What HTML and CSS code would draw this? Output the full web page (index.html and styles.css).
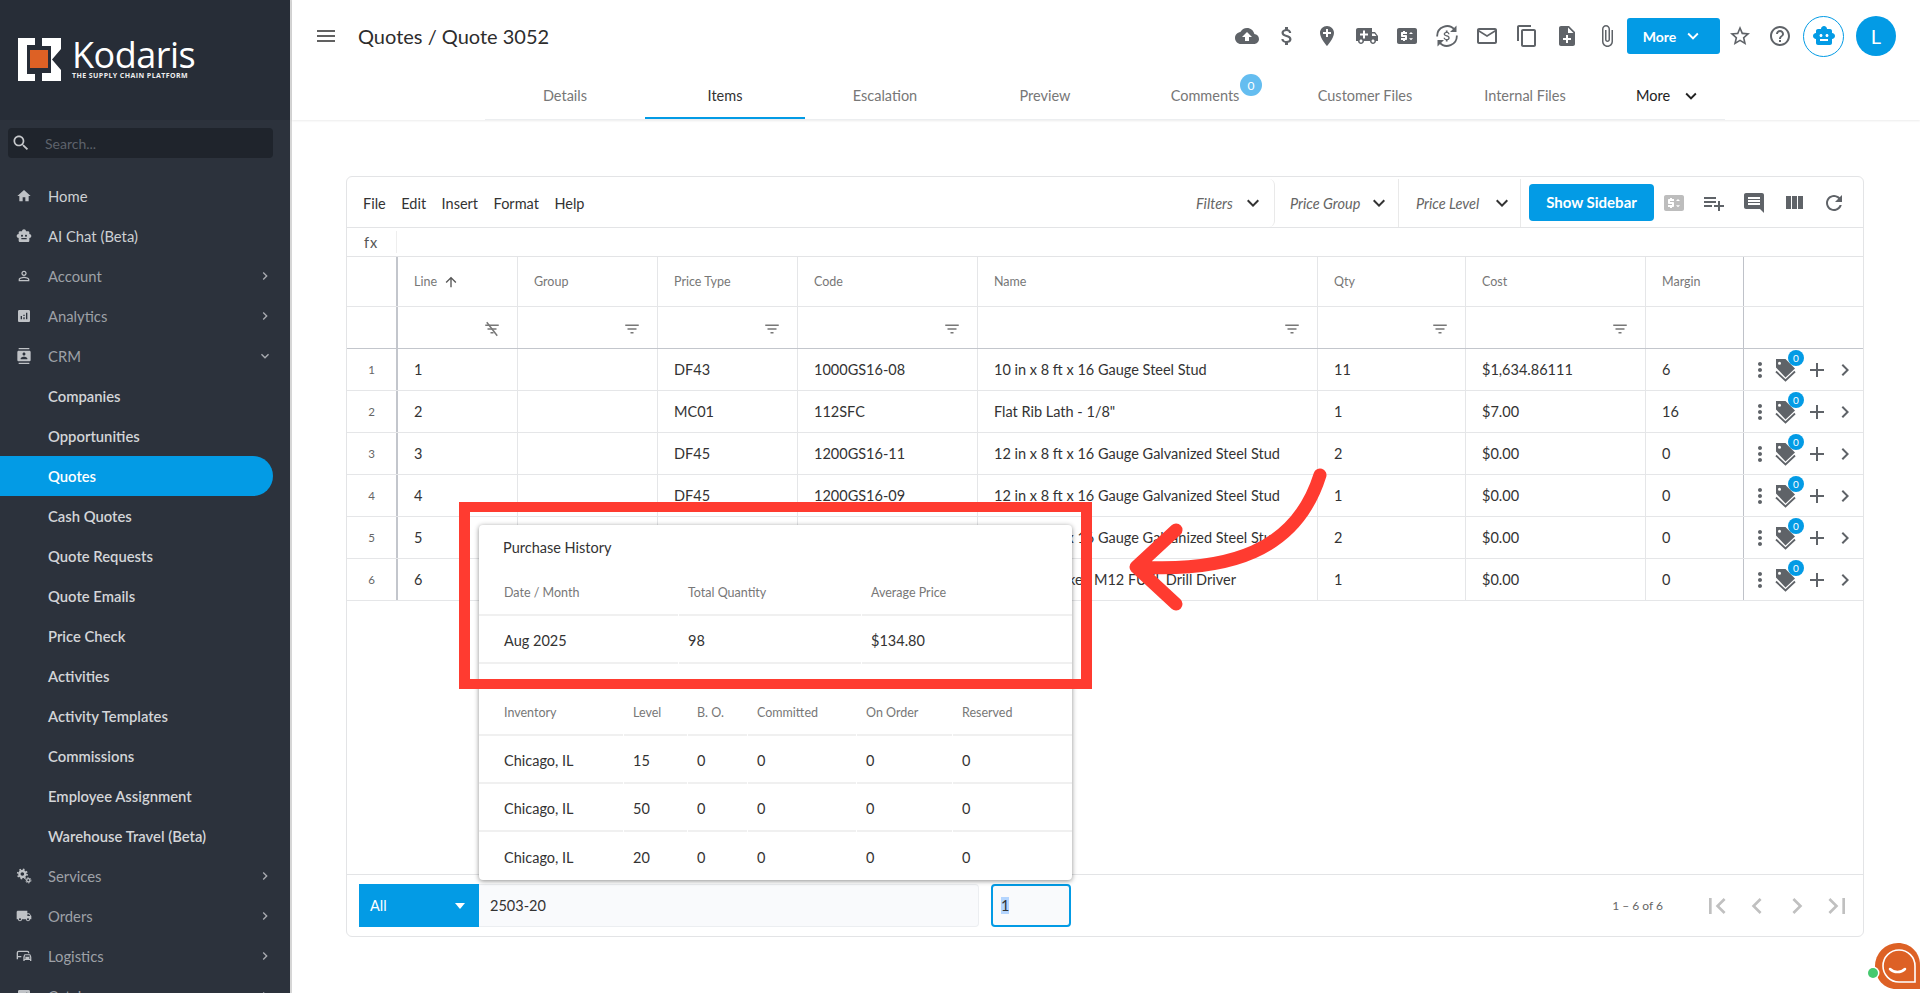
FILE: index.html
```html
<!DOCTYPE html>
<html lang="en">
<head>
<meta charset="utf-8">
<title>Quote 3052</title>
<link rel="stylesheet" href="styles.css">
</head>
<body>
<svg class="defs" width="0" height="0" aria-hidden="true">
<symbol id="i-cloud" viewBox="0 0 24 24"><path d="M19.35 10.04C18.67 6.59 15.64 4 12 4 9.11 4 6.6 5.64 5.35 8.04 2.34 8.36 0 10.91 0 14c0 3.31 2.69 6 6 6h13c2.76 0 5-2.24 5-5 0-2.64-2.05-4.78-4.65-4.96zM14 13v4h-4v-4H7l5-5 5 5h-3z"/></symbol>
<symbol id="i-money" viewBox="0 0 24 24"><path d="M11.8 10.9c-2.27-.59-3-1.2-3-2.15 0-1.09 1.01-1.85 2.7-1.85 1.78 0 2.44.85 2.5 2.1h2.21c-.07-1.72-1.12-3.3-3.21-3.81V3h-3v2.16c-1.94.42-3.5 1.68-3.5 3.61 0 2.31 1.91 3.46 4.7 4.13 2.5.6 3 1.48 3 2.41 0 .69-.49 1.79-2.7 1.79-2.06 0-2.87-.92-2.98-2.1h-2.2c.12 2.19 1.76 3.42 3.68 3.83V21h3v-2.15c1.95-.37 3.5-1.5 3.5-3.55 0-2.84-2.43-3.81-4.7-4.4z"/></symbol>
<symbol id="i-pin" viewBox="0 0 24 24"><path d="M12 2C8.14 2 5 5.14 5 9c0 5.25 7 13 7 13s7-7.75 7-13c0-3.86-3.14-7-7-7zm4 8h-3v3h-2v-3H8V8h3V5h2v3h3v2z"/></symbol>
<symbol id="i-truck" viewBox="0 0 24 24"><path d="M20 8h-3V4H3c-1.1 0-2 .9-2 2v11h2c0 1.66 1.34 3 3 3s3-1.34 3-3h6c0 1.66 1.34 3 3 3s3-1.34 3-3h2v-5l-3-4zM6 18.5c-.83 0-1.5-.67-1.5-1.5s.67-1.5 1.5-1.5 1.5.67 1.5 1.5-.67 1.5-1.5 1.5zm13.5-9l1.96 2.5H17V9.5h2.5zm-1.5 9c-.83 0-1.5-.67-1.5-1.5s.67-1.5 1.5-1.5 1.5.67 1.5 1.5-.67 1.5-1.5 1.5z"/></symbol>
<symbol id="i-truckplus" viewBox="0 0 24 24"><path d="M20 8h-3V4H3c-1.1 0-2 .9-2 2v11h2c0 1.66 1.34 3 3 3s3-1.34 3-3h6c0 1.66 1.34 3 3 3s3-1.34 3-3h2v-5l-3-4zM6 18.5c-.83 0-1.5-.67-1.5-1.5s.67-1.5 1.5-1.5 1.5.67 1.5 1.5-.67 1.5-1.5 1.5zm13.5-9l1.96 2.5H17V9.5h2.5zm-1.5 9c-.83 0-1.5-.67-1.5-1.5s.67-1.5 1.5-1.5 1.5.67 1.5 1.5-.67 1.5-1.5 1.5z"/><path fill="#fff" d="M8 6.5h2v3h3v2h-3v3H8v-3H5v-2h3z"/></symbol>
<symbol id="i-price" viewBox="0 0 24 24"><path d="M20 4H4c-1.11 0-1.99.89-1.99 2L2 18c0 1.11.89 2 2 2h16c1.11 0 2-.89 2-2V6c0-1.11-.89-2-2-2zm-8 6H8v1h3c.55 0 1 .45 1 1v3c0 .55-.45 1-1 1h-1v1H8v-1H6v-2h4v-1H7c-.55 0-1-.45-1-1V9c0-.55.45-1 1-1h1V7h2v1h2v2zm4 6.25l-2-2h4l-2 2zM14 10l2-2 2 2h-4z"/></symbol>
<symbol id="i-sync" viewBox="0 0 24 24"><path fill="none" stroke="currentColor" stroke-width="1.8" d="M2.200 12.500A9.800 9.800 0 0 1 19.500 5.700M21.800 11.500A9.800 9.800 0 0 1 4.500 18.300"/><path d="M21.500 1.500V8h-6.500zM2.500 22.500V16h6.500z"/><path transform="translate(4.800 4.800) scale(.6)" d="M11.800 10.900c-2.270-.59-3-1.200-3-2.150 0-1.090 1.010-1.850 2.700-1.850 1.780 0 2.440.85 2.500 2.100h2.210c-.07-1.720-1.120-3.300-3.210-3.810V3h-3v2.160c-1.940.42-3.500 1.680-3.500 3.610 0 2.310 1.910 3.460 4.700 4.130 2.500.6 3 1.480 3 2.410 0 .69-.49 1.790-2.700 1.790-2.060 0-2.870-.92-2.980-2.100h-2.200c.12 2.190 1.760 3.420 3.680 3.830V21h3v-2.150c1.950-.37 3.500-1.500 3.500-3.550 0-2.840-2.430-3.810-4.700-4.400z"/></symbol>
<symbol id="i-mail" viewBox="0 0 24 24"><path d="M20 4H4c-1.100 0-1.990.9-1.990 2L2 18c0 1.100.9 2 2 2h16c1.100 0 2-.9 2-2V6c0-1.100-.9-2-2-2zm0 14H4V8l8 5 8-5v10zm-8-7L4 6h16l-8 5z"/></symbol>
<symbol id="i-copy" viewBox="0 0 24 24"><path d="M16 1H4c-1.100 0-2 .9-2 2v14h2V3h12V1zm3 4H8c-1.100 0-2 .9-2 2v14c0 1.100.9 2 2 2h11c1.100 0 2-.9 2-2V7c0-1.100-.9-2-2-2zm0 16H8V7h11v14z"/></symbol>
<symbol id="i-note" viewBox="0 0 24 24"><path d="M14 2H6c-1.100 0-1.990.9-1.990 2L4 20c0 1.100.89 2 1.990 2H18c1.100 0 2-.9 2-2V8l-6-6zm2 14h-3v3h-2v-3H8v-2h3v-3h2v3h3v2zm-3-7V3.500L18.500 9H13z"/></symbol>
<symbol id="i-clip" viewBox="0 0 24 24"><path d="M16.500 6v11.500c0 2.210-1.790 4-4 4s-4-1.790-4-4V5c0-1.380 1.120-2.500 2.500-2.500s2.500 1.120 2.500 2.500v10.500c0 .55-.45 1-1 1s-1-.45-1-1V6H10v9.500c0 1.380 1.120 2.500 2.500 2.500s2.500-1.120 2.500-2.500V5c0-2.210-1.790-4-4-4S7 2.790 7 5v12.500c0 3.040 2.460 5.500 5.500 5.500s5.500-2.460 5.500-5.500V6h-1.500z"/></symbol>
<symbol id="i-star" viewBox="0 0 24 24"><path d="M22 9.240l-7.190-.62L12 2 9.190 8.630 2 9.240l5.460 4.730L5.820 21 12 17.270 18.180 21l-1.630-7.030L22 9.240zM12 15.400l-3.760 2.270 1-4.280-3.320-2.880 4.380-.38L12 6.100l1.710 4.040 4.380.38-3.320 2.880 1 4.280L12 15.400z"/></symbol>
<symbol id="i-help" viewBox="0 0 24 24"><path d="M11 18h2v-2h-2v2zm1-16C6.480 2 2 6.480 2 12s4.480 10 10 10 10-4.480 10-10S17.520 2 12 2zm0 18c-4.410 0-8-3.590-8-8s3.590-8 8-8 8 3.590 8 8-3.590 8-8 8zm0-14c-2.210 0-4 1.790-4 4h2c0-1.100.9-2 2-2s2 .9 2 2c0 2-3 1.750-3 5h2c0-2.250 3-2.500 3-5 0-2.210-1.790-4-4-4z"/></symbol>
<symbol id="i-bot" viewBox="0 0 24 24"><path d="M20 9V7c0-1.100-.9-2-2-2h-3c0-1.660-1.340-3-3-3S9 3.340 9 5H6c-1.100 0-2 .9-2 2v2c-1.660 0-3 1.340-3 3s1.340 3 3 3v4c0 1.100.9 2 2 2h12c1.100 0 2-.9 2-2v-4c1.660 0 3-1.340 3-3s-1.340-3-3-3zM7.500 11.500c0-.83.67-1.500 1.500-1.500s1.500.67 1.500 1.500S9.830 13 9 13s-1.500-.67-1.500-1.500zM16 17H8v-2h8v2zm-1-4c-.83 0-1.500-.67-1.500-1.500S14.170 10 15 10s1.500.67 1.500 1.500S15.830 13 15 13z"/></symbol>
<symbol id="i-home" viewBox="0 0 24 24"><path d="M10 20v-6h4v6h5v-8h3L12 3 2 12h3v8z"/></symbol>
<symbol id="i-search" viewBox="0 0 24 24"><path d="M15.500 14h-.79l-.28-.27C15.410 12.590 16 11.110 16 9.500 16 5.910 13.090 3 9.500 3S3 5.910 3 9.500 5.910 16 9.500 16c1.610 0 3.090-.59 4.230-1.570l.27.28v.79l5 4.990L20.490 19l-4.990-5zm-6 0C7.010 14 5 11.990 5 9.500S7.010 5 9.500 5 14 7.010 14 9.500 11.990 14 9.500 14z"/></symbol>
<symbol id="i-person" viewBox="0 0 24 24"><path d="M12 5.900c1.160 0 2.100.94 2.100 2.100s-.94 2.100-2.100 2.100S9.900 9.160 9.900 8s.94-2.100 2.100-2.100m0 9c2.970 0 6.100 1.460 6.100 2.100v1.100H5.900V17c0-.64 3.130-2.100 6.100-2.100M12 4C9.790 4 8 5.790 8 8s1.790 4 4 4 4-1.790 4-4-1.790-4-4-4zm0 9c-2.670 0-8 1.340-8 4v3h16v-3c0-2.660-5.330-4-8-4z"/></symbol>
<symbol id="i-analytics" viewBox="0 0 24 24"><path d="M19 3H5c-1.100 0-2 .9-2 2v14c0 1.100.9 2 2 2h14c1.100 0 2-.9 2-2V5c0-1.100-.9-2-2-2zM9 17H7v-5h2v5zm4 0h-2v-3h2v3zm0-5h-2v-2h2v2zm4 5h-2V7h2v10z"/></symbol>
<symbol id="i-contact" viewBox="0 0 24 24"><path d="M20 0H4v2h16V0zM4 24h16v-2H4v2zM20 4H4c-1.100 0-2 .9-2 2v12c0 1.100.9 2 2 2h16c1.100 0 2-.9 2-2V6c0-1.100-.9-2-2-2zm-8 2.750c1.240 0 2.250 1.010 2.250 2.250s-1.010 2.250-2.250 2.250S9.750 10.240 9.750 9 10.760 6.750 12 6.750zM17 17H7v-1.500c0-1.670 3.330-2.500 5-2.500s5 .83 5 2.500V17z"/></symbol>
<symbol id="i-gears" viewBox="0 0 24 24"><circle cx="9.500" cy="9" r="4.500" fill="none" stroke="currentColor" stroke-width="3.500"/><circle cx="9.500" cy="9" r="7" fill="none" stroke="currentColor" stroke-width="2.500" stroke-dasharray="2.500 3"/><circle cx="18.500" cy="18.500" r="2.500" fill="none" stroke="currentColor" stroke-width="2"/><circle cx="18.500" cy="18.500" r="4" fill="none" stroke="currentColor" stroke-width="1.500" stroke-dasharray="2 2.200"/></symbol>
<symbol id="i-car" viewBox="0 0 24 24"><path d="M4 4h13a3 3 0 0 1 3 3v1h-2V7a1 1 0 0 0-1-1H4a1 1 0 0 0-1 1v5h5v2H3v3H1V7a3 3 0 0 1 3-3z"/><path d="M11 13.500l1-3a1.500 1.500 0 0 1 1.400-1h7.200a1.500 1.500 0 0 1 1.400 1l1 3v6h-2v-1.500H13v1.500h-2zM13 13h8l-.6-2h-6.800zm.5 3a1 1 0 1 0 0-2 1 1 0 0 0 0 2zm7 0a1 1 0 1 0 0-2 1 1 0 0 0 0 2z"/></symbol>
<symbol id="i-menu" viewBox="0 0 24 24"><path d="M3 18h18v-2H3v2zm0-5h18v-2H3v2zm0-7v2h18V6H3z"/></symbol>
<symbol id="i-down" viewBox="0 0 24 24"><path d="M16.590 8.590L12 13.170 7.410 8.590 6 10l6 6 6-6z"/></symbol>
<symbol id="i-right" viewBox="0 0 24 24"><path d="M10 6L8.590 7.410 13.170 12l-4.580 4.590L10 18l6-6z"/></symbol>
<symbol id="i-left" viewBox="0 0 24 24"><path d="M15.410 7.410L14 6l-6 6 6 6 1.410-1.410L10.830 12z"/></symbol>
<symbol id="i-first" viewBox="0 0 24 24"><path d="M18.410 16.590L13.820 12l4.590-4.590L17 6l-6 6 6 6zM6 6h2v12H6z"/></symbol>
<symbol id="i-last" viewBox="0 0 24 24"><path d="M5.590 7.410L10.180 12l-4.590 4.590L7 18l6-6-6-6zM16 6h2v12h-2z"/></symbol>
<symbol id="i-playlist" viewBox="0 0 24 24"><path d="M14 10H2v2h12v-2zm0-4H2v2h12V6zm4 8v-4h-2v4h-4v2h4v4h2v-4h4v-2h-4zM2 16h8v-2H2v2z"/></symbol>
<symbol id="i-comment" viewBox="0 0 24 24"><path d="M21.990 4c0-1.100-.89-2-1.990-2H4c-1.100 0-2 .9-2 2v12c0 1.100.9 2 2 2h14l4 4-.01-18zM18 14H6v-2h12v2zm0-3H6V9h12v2zm0-3H6V6h12v2z"/></symbol>
<symbol id="i-columns" viewBox="0 0 24 24"><path d="M10 18h5V5h-5v13zm-6 0h5V5H4v13zM16 5v13h5V5h-5z"/></symbol>
<symbol id="i-refresh" viewBox="0 0 24 24"><path d="M17.650 6.350C16.200 4.900 14.210 4 12 4c-4.420 0-7.990 3.580-7.990 8s3.570 8 7.990 8c3.730 0 6.840-2.550 7.730-6h-2.080c-.82 2.330-3.040 4-5.650 4-3.310 0-6-2.690-6-6s2.690-6 6-6c1.660 0 3.140.69 4.220 1.780L13 11h7V4l-2.350 2.350z"/></symbol>
<symbol id="i-filter" viewBox="0 0 24 24"><path d="M10 18h4v-2h-4v2zM3 6v2h18V6H3zm3 7h12v-2H6v2z"/></symbol>
<symbol id="i-filteroff" viewBox="0 0 24 24"><path d="M10 18h4v-2h-4v2zM3 6v2h18V6H3zm3 7h12v-2H6v2z"/><path d="M5 3l14 18" fill="none" stroke="currentColor" stroke-width="2"/></symbol>
<symbol id="i-up" viewBox="0 0 24 24"><path d="M4 12l1.410 1.410L11 7.830V20h2V7.830l5.580 5.590L20 12l-8-8-8 8z"/></symbol>
<symbol id="i-dots" viewBox="0 0 24 24"><path d="M12 8c1.100 0 2-.9 2-2s-.9-2-2-2-2 .9-2 2 .9 2 2 2zm0 2c-1.100 0-2 .9-2 2s.9 2 2 2 2-.9 2-2-.9-2-2-2zm0 6c-1.100 0-2 .9-2 2s.9 2 2 2 2-.9 2-2-.9-2-2-2z"/></symbol>
<symbol id="i-add" viewBox="0 0 24 24"><path d="M19 13h-6v6h-2v-6H5v-2h6V5h2v6h6v2z"/></symbol>
<symbol id="i-tags" viewBox="0 0 24 24"><path fill-rule="evenodd" d="M4 1h9.500L23 10.500 13.500 19.500 4 9.500zM7.500 3.700a1.500 1.500 0 1 0 0 3 1.500 1.500 0 0 0 0-3z"/><path d="M4 13.500L13.500 22.500 23 13.500" fill="none" stroke="currentColor" stroke-width="1.800"/></symbol>
</svg>

<div class="app">
  <aside class="sidebar">
    <div class="brand">
      <svg class="logo-mark" viewBox="0 0 43 43"><path fill="#fff" d="M0 0H17V7H9V36H17V43H0Z"/><path fill="#fff" d="M24 0H43V11L34 21.500L43 32V43H24V35H33V8H24Z"/><rect x="12" y="12" width="18" height="18" fill="#dd6125"/></svg>
      <div class="logo-text">
        <div class="logo-name">Kodaris</div>
        <div class="logo-tag">THE SUPPLY CHAIN PLATFORM</div>
      </div>
    </div>
    <div class="search">
      <svg class="ic search-ic"><use href="#i-search"/></svg>
      <span>Search...</span>
    </div>
    <nav class="nav">
      <a class="item bright"><svg class="ic nav-ic"><use href="#i-home"/></svg>Home</a>
      <a class="item bright"><svg class="ic nav-ic"><use href="#i-bot"/></svg>AI Chat (Beta)</a>
      <a class="item"><svg class="ic nav-ic"><use href="#i-person"/></svg>Account<svg class="ic nav-ch"><use href="#i-right"/></svg></a>
      <a class="item"><svg class="ic nav-ic"><use href="#i-analytics"/></svg>Analytics<svg class="ic nav-ch"><use href="#i-right"/></svg></a>
      <a class="item"><svg class="ic nav-ic"><use href="#i-contact"/></svg>CRM<svg class="ic nav-ch"><use href="#i-down"/></svg></a>
      <a class="item sub">Companies</a>
      <a class="item sub">Opportunities</a>
      <a class="item sub active">Quotes</a>
      <a class="item sub">Cash Quotes</a>
      <a class="item sub">Quote Requests</a>
      <a class="item sub">Quote Emails</a>
      <a class="item sub">Price Check</a>
      <a class="item sub">Activities</a>
      <a class="item sub">Activity Templates</a>
      <a class="item sub">Commissions</a>
      <a class="item sub">Employee Assignment</a>
      <a class="item sub">Warehouse Travel (Beta)</a>
      <a class="item"><svg class="ic nav-ic"><use href="#i-gears"/></svg>Services<svg class="ic nav-ch"><use href="#i-right"/></svg></a>
      <a class="item"><svg class="ic nav-ic"><use href="#i-truck"/></svg>Orders<svg class="ic nav-ch"><use href="#i-right"/></svg></a>
      <a class="item"><svg class="ic nav-ic"><use href="#i-car"/></svg>Logistics<svg class="ic nav-ch"><use href="#i-right"/></svg></a>
      <a class="item"><svg class="ic nav-ic"><use href="#i-analytics"/></svg>Catalog<svg class="ic nav-ch"><use href="#i-right"/></svg></a>
    </nav>
  </aside>

  <main class="main">
    <header class="topbar">
      <div class="top-row">
        <svg class="ic menu-ic"><use href="#i-menu"/></svg>
        <h1 class="title">Quotes / Quote 3052</h1>
        <div class="actions">
          <span class="act"><svg class="ic"><use href="#i-cloud"/></svg></span>
          <span class="act"><svg class="ic"><use href="#i-money"/></svg></span>
          <span class="act"><svg class="ic"><use href="#i-pin"/></svg></span>
          <span class="act"><svg class="ic"><use href="#i-truckplus"/></svg></span>
          <span class="act"><svg class="ic"><use href="#i-price"/></svg></span>
          <span class="act"><svg class="ic"><use href="#i-sync"/></svg></span>
          <span class="act"><svg class="ic"><use href="#i-mail"/></svg></span>
          <span class="act"><svg class="ic"><use href="#i-copy"/></svg></span>
          <span class="act"><svg class="ic"><use href="#i-note"/></svg></span>
          <span class="act"><svg class="ic"><use href="#i-clip"/></svg></span>
          <button class="btn more-btn">More<svg class="ic"><use href="#i-down"/></svg></button>
          <span class="act"><svg class="ic"><use href="#i-star"/></svg></span>
          <span class="act"><svg class="ic"><use href="#i-help"/></svg></span>
          <span class="bot-circle"><svg class="ic"><use href="#i-bot"/></svg></span>
          <span class="avatar">L</span>
        </div>
      </div>
      <div class="tabs">
        <span class="tab">Details</span>
        <span class="tab on">Items</span>
        <span class="tab">Escalation</span>
        <span class="tab">Preview</span>
        <span class="tab">Comments<b class="tab-badge">0</b></span>
        <span class="tab">Customer Files</span>
        <span class="tab">Internal Files</span>
        <span class="tab tab-more">More<svg class="ic"><use href="#i-down"/></svg></span>
      </div>
    </header>

    <section class="card">
      <div class="toolbar">
        <div class="menus"><span>File</span><span>Edit</span><span>Insert</span><span>Format</span><span>Help</span></div>
        <div class="tools">
          <span class="drop drop-filter">Filters<svg class="ic"><use href="#i-down"/></svg></span>
          <span class="drop drop-group">Price Group<svg class="ic"><use href="#i-down"/></svg></span>
          <span class="drop drop-level">Price Level<svg class="ic"><use href="#i-down"/></svg></span>
          <button class="btn side-btn">Show Sidebar</button>
          <span class="tool"><svg class="ic light"><use href="#i-price"/></svg></span>
          <span class="tool"><svg class="ic"><use href="#i-playlist"/></svg></span>
          <span class="tool"><svg class="ic"><use href="#i-comment"/></svg></span>
          <span class="tool"><svg class="ic"><use href="#i-columns"/></svg></span>
          <span class="tool"><svg class="ic"><use href="#i-refresh"/></svg></span>
        </div>
      </div>
      <div class="fx"><span class="fx-label">fx</span></div>
      <div class="grid">
        <div class="row head">
          <div class="cell idx"></div>
          <div class="cell">Line<svg class="ic up-ic"><use href="#i-up"/></svg></div>
          <div class="cell">Group</div><div class="cell">Price Type</div><div class="cell">Code</div><div class="cell">Name</div><div class="cell">Qty</div><div class="cell">Cost</div><div class="cell last">Margin</div><div class="cell end"></div>
        </div>
        <div class="row filters">
          <div class="cell idx"></div>
          <div class="cell"><svg class="ic fl"><use href="#i-filteroff"/></svg></div>
          <div class="cell"><svg class="ic fl"><use href="#i-filter"/></svg></div>
          <div class="cell"><svg class="ic fl"><use href="#i-filter"/></svg></div>
          <div class="cell"><svg class="ic fl"><use href="#i-filter"/></svg></div>
          <div class="cell"><svg class="ic fl"><use href="#i-filter"/></svg></div>
          <div class="cell"><svg class="ic fl"><use href="#i-filter"/></svg></div>
          <div class="cell"><svg class="ic fl"><use href="#i-filter"/></svg></div>
          <div class="cell last"></div><div class="cell end"></div>
        </div>
        <div class="row data">
          <div class="cell idx">1</div><div class="cell">1</div><div class="cell"></div><div class="cell">DF43</div><div class="cell">1000GS16-08</div><div class="cell">10 in x 8 ft x 16 Gauge Steel Stud</div><div class="cell">11</div><div class="cell">$1,634.86111</div><div class="cell last">6</div>
          <div class="cell end"><svg class="ic dots"><use href="#i-dots"/></svg><span class="tagwrap"><svg class="ic tag"><use href="#i-tags"/></svg><b class="mini">0</b></span><svg class="ic plus"><use href="#i-add"/></svg><svg class="ic chev"><use href="#i-right"/></svg></div>
        </div>
        <div class="row data">
          <div class="cell idx">2</div><div class="cell">2</div><div class="cell"></div><div class="cell">MC01</div><div class="cell">112SFC</div><div class="cell">Flat Rib Lath - 1/8"</div><div class="cell">1</div><div class="cell">$7.00</div><div class="cell last">16</div>
          <div class="cell end"><svg class="ic dots"><use href="#i-dots"/></svg><span class="tagwrap"><svg class="ic tag"><use href="#i-tags"/></svg><b class="mini">0</b></span><svg class="ic plus"><use href="#i-add"/></svg><svg class="ic chev"><use href="#i-right"/></svg></div>
        </div>
        <div class="row data">
          <div class="cell idx">3</div><div class="cell">3</div><div class="cell"></div><div class="cell">DF45</div><div class="cell">1200GS16-11</div><div class="cell">12 in x 8 ft x 16 Gauge Galvanized Steel Stud</div><div class="cell">2</div><div class="cell">$0.00</div><div class="cell last">0</div>
          <div class="cell end"><svg class="ic dots"><use href="#i-dots"/></svg><span class="tagwrap"><svg class="ic tag"><use href="#i-tags"/></svg><b class="mini">0</b></span><svg class="ic plus"><use href="#i-add"/></svg><svg class="ic chev"><use href="#i-right"/></svg></div>
        </div>
        <div class="row data">
          <div class="cell idx">4</div><div class="cell">4</div><div class="cell"></div><div class="cell">DF45</div><div class="cell">1200GS16-09</div><div class="cell">12 in x 8 ft x 16 Gauge Galvanized Steel Stud</div><div class="cell">1</div><div class="cell">$0.00</div><div class="cell last">0</div>
          <div class="cell end"><svg class="ic dots"><use href="#i-dots"/></svg><span class="tagwrap"><svg class="ic tag"><use href="#i-tags"/></svg><b class="mini">0</b></span><svg class="ic plus"><use href="#i-add"/></svg><svg class="ic chev"><use href="#i-right"/></svg></div>
        </div>
        <div class="row data">
          <div class="cell idx">5</div><div class="cell">5</div><div class="cell"></div><div class="cell">DF45</div><div class="cell">1200GS16-07</div><div class="cell">12 in x 8 ft x 16 Gauge Galvanized Steel Stud</div><div class="cell">2</div><div class="cell">$0.00</div><div class="cell last">0</div>
          <div class="cell end"><svg class="ic dots"><use href="#i-dots"/></svg><span class="tagwrap"><svg class="ic tag"><use href="#i-tags"/></svg><b class="mini">0</b></span><svg class="ic plus"><use href="#i-add"/></svg><svg class="ic chev"><use href="#i-right"/></svg></div>
        </div>
        <div class="row data">
          <div class="cell idx">6</div><div class="cell">6</div><div class="cell"></div><div class="cell">MW01</div><div class="cell">2503-20</div><div class="cell">1/2 Milwaukee M12 FUEL Drill Driver</div><div class="cell">1</div><div class="cell">$0.00</div><div class="cell last">0</div>
          <div class="cell end"><svg class="ic dots"><use href="#i-dots"/></svg><span class="tagwrap"><svg class="ic tag"><use href="#i-tags"/></svg><b class="mini">0</b></span><svg class="ic plus"><use href="#i-add"/></svg><svg class="ic chev"><use href="#i-right"/></svg></div>
        </div>
      </div>
      <div class="foot">
        <div class="sel">All<span class="caret"></span></div>
        <div class="code-input">2503-20</div>
        <div class="qty-input"><span class="selected">1</span></div>
        <div class="pager">
          <span class="count">1 – 6 of 6</span>
          <svg class="ic pg"><use href="#i-first"/></svg>
          <svg class="ic pg"><use href="#i-left"/></svg>
          <svg class="ic pg"><use href="#i-right"/></svg>
          <svg class="ic pg"><use href="#i-last"/></svg>
        </div>
      </div>
    </section>
  </main>
</div>

<div class="popup">
  <div class="pop-title">Purchase History</div>
  <div class="ph-row ph-head"><span>Date / Month</span><span>Total Quantity</span><span>Average Price</span></div>
  <div class="ph-row"><span>Aug 2025</span><span>98</span><span>$134.80</span></div>
  <div class="pop-gap"></div>
  <div class="inv-row ph-head"><span>Inventory</span><span>Level</span><span>B. O.</span><span>Committed</span><span>On Order</span><span>Reserved</span></div>
  <div class="inv-row"><span>Chicago, IL</span><span>15</span><span>0</span><span>0</span><span>0</span><span>0</span></div>
  <div class="inv-row"><span>Chicago, IL</span><span>50</span><span>0</span><span>0</span><span>0</span><span>0</span></div>
  <div class="inv-row"><span>Chicago, IL</span><span>20</span><span>0</span><span>0</span><span>0</span><span>0</span></div>
</div>

<div class="callout"></div>
<svg class="arrow" viewBox="0 0 1920 993" aria-hidden="true">
  <path d="M1320 475C1296 552 1228 572 1138 567M1176 530L1136 567L1176 604"/>
</svg>

<svg class="chat" viewBox="0 0 54 46" aria-hidden="true">
  <path fill="#dd6125" d="M9 23A23 23 0 0 1 32 0C44 0 54 9 54 22V46H30C18 46 9 36 9 23Z"/>
  <path fill="none" stroke="#fff" stroke-width="1.600" d="M17 23A16 16 0 0 1 49 23V39H33A16 16 0 0 1 17 23Z"/>
  <path fill="none" stroke="#fff" stroke-width="2.500" stroke-linecap="round" d="M24 26C28 30 35 30 39 26"/>
  <circle cx="7" cy="30" r="6.500" fill="#fff"/>
  <circle cx="7" cy="30" r="5" fill="#46c96f"/>
</svg>
</body>
</html>
```
FILE: styles.css
```css
* { box-sizing: border-box; }
html, body { margin: 0; height: 993px; overflow: hidden; background: #fff; }
body { font-family: Lato, "Noto Sans", sans-serif; font-size: 14.5px; color: #333; position: relative; }
.defs { position: absolute; }
.ic { width: 24px; height: 24px; fill: currentColor; flex: none; display: block; }
.app { display: flex; height: 993px; }

.sidebar { width: 292px; flex: none; background: #2c323c; border-right: 2px solid #d6d6d6; overflow: hidden; }
.brand { height: 120px; background: #272d37; display: flex; align-items: center; padding: 0 0 0 18px; }
.logo-mark { width: 43px; height: 43px; margin-top: -1px; flex: none; }
.logo-text { margin-left: 11px; color: #fff; font-family: "Open Sans", sans-serif; margin-top: -1px; }
.logo-name { font-size: 36px; line-height: 32px; letter-spacing: -.5px; }
.logo-tag { font-size: 7px; font-weight: 700; line-height: 9px; letter-spacing: .42px; white-space: nowrap; color: #eee; }
.search { margin: 8px 0 0 8px; width: 265px; height: 30px; background: #1f242c; border-radius: 4px; display: flex; align-items: center; color: #5d626b; font-size: 14px; }
.search-ic { width: 20px; height: 20px; margin: 0 14px 0 3px; color: #c6c8cb; }
.nav { margin-top: 18px; }
.item { display: flex; align-items: center; height: 40px; color: #9ea1a7; font-size: 14.8px; white-space: nowrap; width: 290px; padding-right: 17px; }
.item.bright { color: #cdd0d3; }
.item.sub { color: #d3d5d8; padding-left: 48px; font-weight: 600; }
.item.active { background: #039be5; color: #fff; width: 273px; border-radius: 0 20px 20px 0; }
.nav-ic { width: 16px; height: 16px; margin: 0 16px 0 16px; color: #bfc2c6; }
.nav-ch { width: 16px; height: 16px; margin-left: auto; color: #a9acb1; }

.main { flex: 1; min-width: 0; }
.topbar { height: 120px; box-shadow: 0 1px 2px rgba(0,0,0,.08); }
.top-row { height: 72px; display: flex; align-items: center; padding: 0 24px 0 22px; color: #5f6368; }
.menu-ic { color: #616161; }
.title { margin: 0 0 0 20px; font-size: 20px; font-weight: 400; color: #2d2d2d; white-space: nowrap; }
.actions { margin-left: auto; display: flex; align-items: center; }
.act { width: 40px; height: 36px; display: flex; align-items: center; justify-content: center; }
.btn { border: 0; background: #039be5; color: #fff; font: inherit; border-radius: 3px; }
.more-btn { width: 93px; height: 36px; display: flex; align-items: center; justify-content: center; font-weight: 700; font-size: 14px; gap: 6px; padding: 0; }
.more-btn .ic { width: 22px; height: 22px; }
.bot-circle { width: 41px; height: 41px; border: 1px solid #039be5; border-radius: 50%; margin-left: 3px; display: flex; align-items: center; justify-content: center; color: #039be5; }
.avatar { width: 40px; height: 40px; background: #039be5; color: #fff; border-radius: 50%; margin-left: 12px; font-size: 20px; display: flex; align-items: center; justify-content: center; }
.tabs { display: flex; margin-left: 193px; width: 1240px; height: 48px; border-bottom: 1px solid #eceef0; }
.tab { width: 160px; flex: none; height: 47px; display: flex; align-items: center; justify-content: center; color: #777; position: relative; }
.tab.on { color: #333; border-bottom: 2px solid #039be5; padding-top: 2px; }
.tab-more { color: #222; gap: 10px; width: 120px; justify-content: flex-start; padding-left: 31px; }
.tab-more .ic { width: 22px; height: 22px; }
.tab-badge { position: absolute; left: 115px; top: 2px; width: 22px; height: 22px; border-radius: 50%; background: #64bdf0; color: #fff; font-size: 12px; font-weight: 400; display: flex; align-items: center; justify-content: center; }

.card { margin: 56px 0 0 54px; width: 1518px; height: 761px; border: 1px solid #e3e4e6; border-radius: 6px; display: flex; flex-direction: column; }
.toolbar { height: 51px; padding-top: 2px; display: flex; align-items: center; border-bottom: 1px solid #e3e4e6; flex: none; }
.menus { display: flex; gap: 15.5px; padding-left: 16px; color: #333; }
.tools { margin-left: auto; display: flex; align-items: center; height: 100%; }
.drop { display: flex; align-items: center; height: 100%; font-style: italic; color: #666; border-right: 1px solid #e9e9e9; }
.drop .ic { color: #333; margin-left: auto; }
.drop-filter { width: 79px; padding-right: 9px; border-radius: 0 6px 6px 0; }
.drop-group { width: 124px; padding: 0 7px 0 15px; }
.drop-level { width: 122px; padding: 0 6px 0 17px; }
.side-btn { width: 125px; height: 37px; margin: -2px 0 0 8px; font-weight: 700; font-size: 15px; padding: 0; border-radius: 4px; }
.tool { width: 40px; display: flex; justify-content: center; color: #5f6368; }
.tool .light { color: #bdbdbd; }
.tools .tool:last-child { margin-right: 9px; }
.fx { height: 29px; border-bottom: 1px solid #e3e4e6; display: flex; align-items: center; flex: none; }
.fx-label { width: 50px; height: 22px; border-right: 1px solid #eee; display: flex; align-items: center; padding-left: 17px; letter-spacing: 1px; color: #555; }

.grid { flex: 1; min-height: 0; }
.row { display: grid; grid-template-columns: 51px 120px 140px 140px 180px 340px 148px 180px 98px 119px; border-bottom: 1px solid #e5e6e8; }
.cell { display: flex; align-items: center; padding-left: 16px; border-right: 1px solid #e5e6e8; white-space: nowrap; min-width: 0; }
.idx { border-right: 2px solid #c3c6cc; padding: 0; justify-content: center; font-size: 11.5px; color: #666; }
.last { border-right: 1px solid #bfc2c9; }
.end { border-right: 0; padding: 0; }
.head { height: 50px; color: #777; font-size: 12.5px; }
.filters { height: 42px; border-bottom-color: #c3c6cc; }
.filters .cell { justify-content: flex-end; padding-right: 16px; }
.filters .end, .filters .idx { padding: 0; }
.up-ic { width: 16px; height: 16px; margin-left: 6px; color: #555; }
.fl { width: 18px; height: 18px; color: #777; margin-top: 3px; }
.data { height: 42px; color: #333; }
.data .end { color: #5f6368; position: relative; padding-left: 4px; }
.tagwrap { position: relative; width: 24px; height: 24px; }
.tag { width: 24px; height: 24px; }
.mini { position: absolute; left: 16px; top: -8px; width: 16px; height: 16px; border-radius: 50%; background: #039be5; color: #fff; font-size: 10px; font-weight: 400; display: flex; align-items: center; justify-content: center; }
.plus { margin-left: 9px; }
.chev { margin-left: 4px; }

.foot { height: 62px; flex: none; border-top: 1px solid #e3e4e6; display: flex; align-items: center; padding: 0 0 0 12px; }
.sel { width: 120px; height: 43px; background: #039be5; color: #fff; display: flex; align-items: center; padding-left: 11px; position: relative; }
.caret { position: absolute; right: 14px; top: 19px; border: 5px solid transparent; border-top: 6px solid #fff; border-bottom: 0; }
.code-input { width: 500px; height: 43px; background: #f9fafc; border: 1px solid #eceef1; border-left: 0; border-radius: 0 4px 4px 0; display: flex; align-items: center; padding-left: 11px; color: #333; }
.qty-input { width: 80px; height: 43px; margin-left: 12px; border: 2px solid #039be5; border-radius: 4px; background: #f9fafc; display: flex; align-items: center; padding-left: 8px; }
.selected { background: #b4d5fe; }
.pager { margin-left: auto; display: flex; align-items: center; color: #c0c0c0; padding-right: 10px; }
.count { color: #666; font-size: 12px; margin-right: 30px; }
.pg { width: 32px; height: 32px; margin-left: 8px; }

.popup { position: absolute; left: 479px; top: 525px; width: 593px; height: 355px; background: #fff; border-radius: 4px; box-shadow: 0 1px 5px rgba(0,0,0,.45); }
.pop-title { height: 44px; padding: 0 0 0 24px; display: flex; align-items: center; color: #333; }
.ph-row, .inv-row { display: grid; height: 48px; column-gap: 1px; align-items: stretch; }
.ph-row { grid-template-columns: 199px 182px 1fr; }
.inv-row { grid-template-columns: 144px 63px 59px 108px 95px 1fr; }
.ph-row span, .inv-row span { display: flex; align-items: center; padding: 2px 0 0 9px; border-bottom: 2px solid #f0f0f0; }
.ph-row span:first-child, .inv-row span:first-child { padding-left: 25px; }
.ph-head { height: 47px; font-size: 12.5px; color: #777; }
.inv-row:last-child span { border-bottom: 0; }
.pop-gap { height: 25px; }

.callout { position: absolute; left: 459px; top: 502px; width: 633px; height: 187px; border: 11px solid #ff3b30; border-width: 10px 11px; }
.arrow { position: absolute; left: 0; top: 0; width: 1920px; height: 993px; fill: none; stroke: #ff3b30; stroke-width: 13px; stroke-linecap: round; stroke-linejoin: round; pointer-events: none; }
.chat { position: absolute; left: 1866px; top: 943px; width: 54px; height: 46px; }
```
